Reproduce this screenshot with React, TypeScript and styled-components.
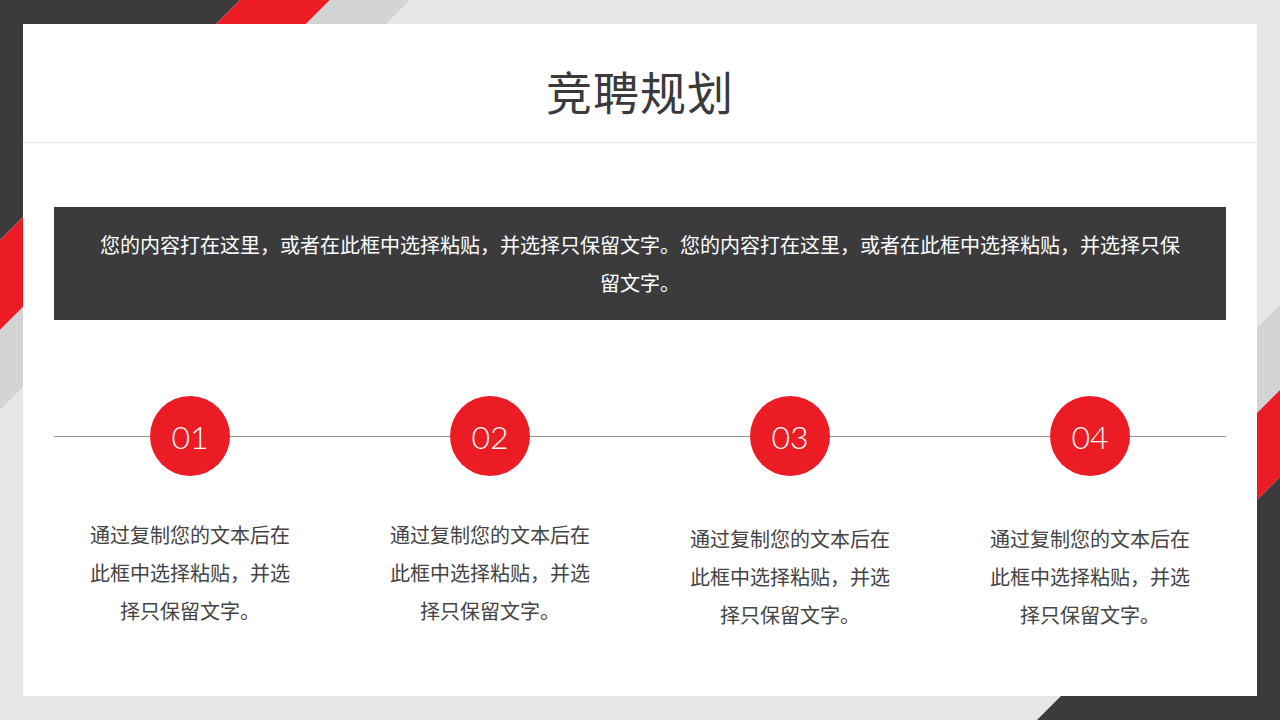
import React from "react";
import styled, { createGlobalStyle } from "styled-components";

const Global = createGlobalStyle`
  html, body { margin: 0; padding: 0; }
  body { width: 1280px; height: 720px; overflow: hidden; background: #e6e7e9;
    font-family: "Microsoft YaHei", "Noto Sans CJK SC", sans-serif; }
`;

const Page = styled.div`
  position: relative; width: 1280px; height: 720px; background: #e6e7e9;
  padding: 24px 23px; box-sizing: border-box;
`;
const Deco = styled.svg`position: absolute; inset: 0; width: 1280px; height: 720px;`;
const Card = styled.div`
  position: relative; background: #fff; height: 672px; display: flex; flex-direction: column;
`;
const Header = styled.div`
  height: 118px; border-bottom: 1px solid #e8e8e8; display: flex; align-items: center; justify-content: center;
`;
const Title = styled.h1`
  margin: 14px 0 0; font-size: 46px; font-weight: 400; color: #3a3a3c; letter-spacing: 1px;
`;
const Banner = styled.div`
  margin: 64px 31px 0; height: 113px; background: #3b3b3d; color: #fff;
  font-size: 20px; line-height: 38px; text-align: center; display: flex; align-items: center; justify-content: center;
  padding: 0 40px;
`;
const Steps = styled.div`
  position: relative; margin-top: 76px; display: grid; grid-template-columns: repeat(4, 300px); padding-left: 17px;
  &::before { content: ""; position: absolute; left: 31px; right: 31px; top: 40px; height: 1px; background: #8a9099; }
`;
const Step = styled.div<{ $off: number }>`
  display: flex; flex-direction: column; align-items: center; position: relative;
  p { margin: ${(p) => 40 + p.$off}px 0 0; width: 214px; text-align: center; font-size: 20px; line-height: 38px; color: #444; }
`;
const Circle = styled.div`
  width: 80px; height: 80px; border-radius: 50%; background: #ec1c24; color: #fff;
  display: flex; align-items: center; justify-content: center; font-family: "Lato", sans-serif; font-weight: 300; font-size: 32px;
`;

const txt = "通过复制您的文本后在此框中选择粘贴，并选择只保留文字。";

export default function App() {
  return (
    <Page>
      <Global />
      <Deco viewBox="0 0 1280 720">
        <polygon points="0,0 240,0 0,240" fill="#3b3b3d" />
        <polygon points="0,240 240,0 330,0 0,330" fill="#ec1c24" />
        <polygon points="0,330 330,0 410,0 0,410" fill="#d2d3d5" />
        <polygon points="1280,305 1280,390 1200,470 1200,385" fill="#d2d3d5" />
        <polygon points="1280,390 1280,477 1200,557 1200,470" fill="#ec1c24" />
        <polygon points="1280,477 1280,720 1037,720" fill="#3b3b3d" />
      </Deco>
      <Card>
        <Header><Title>竞聘规划</Title></Header>
        <Banner>您的内容打在这里，或者在此框中选择粘贴，并选择只保留文字。您的内容打在这里，或者在此框中选择粘贴，并选择只保留文字。</Banner>
        <Steps>
          {["01", "02", "03", "04"].map((n, i) => (
            <Step key={n} $off={i >= 2 ? 4 : 0}>
              <Circle>{n}</Circle>
              <p>{txt}</p>
            </Step>
          ))}
        </Steps>
      </Card>
    </Page>
  );
}
